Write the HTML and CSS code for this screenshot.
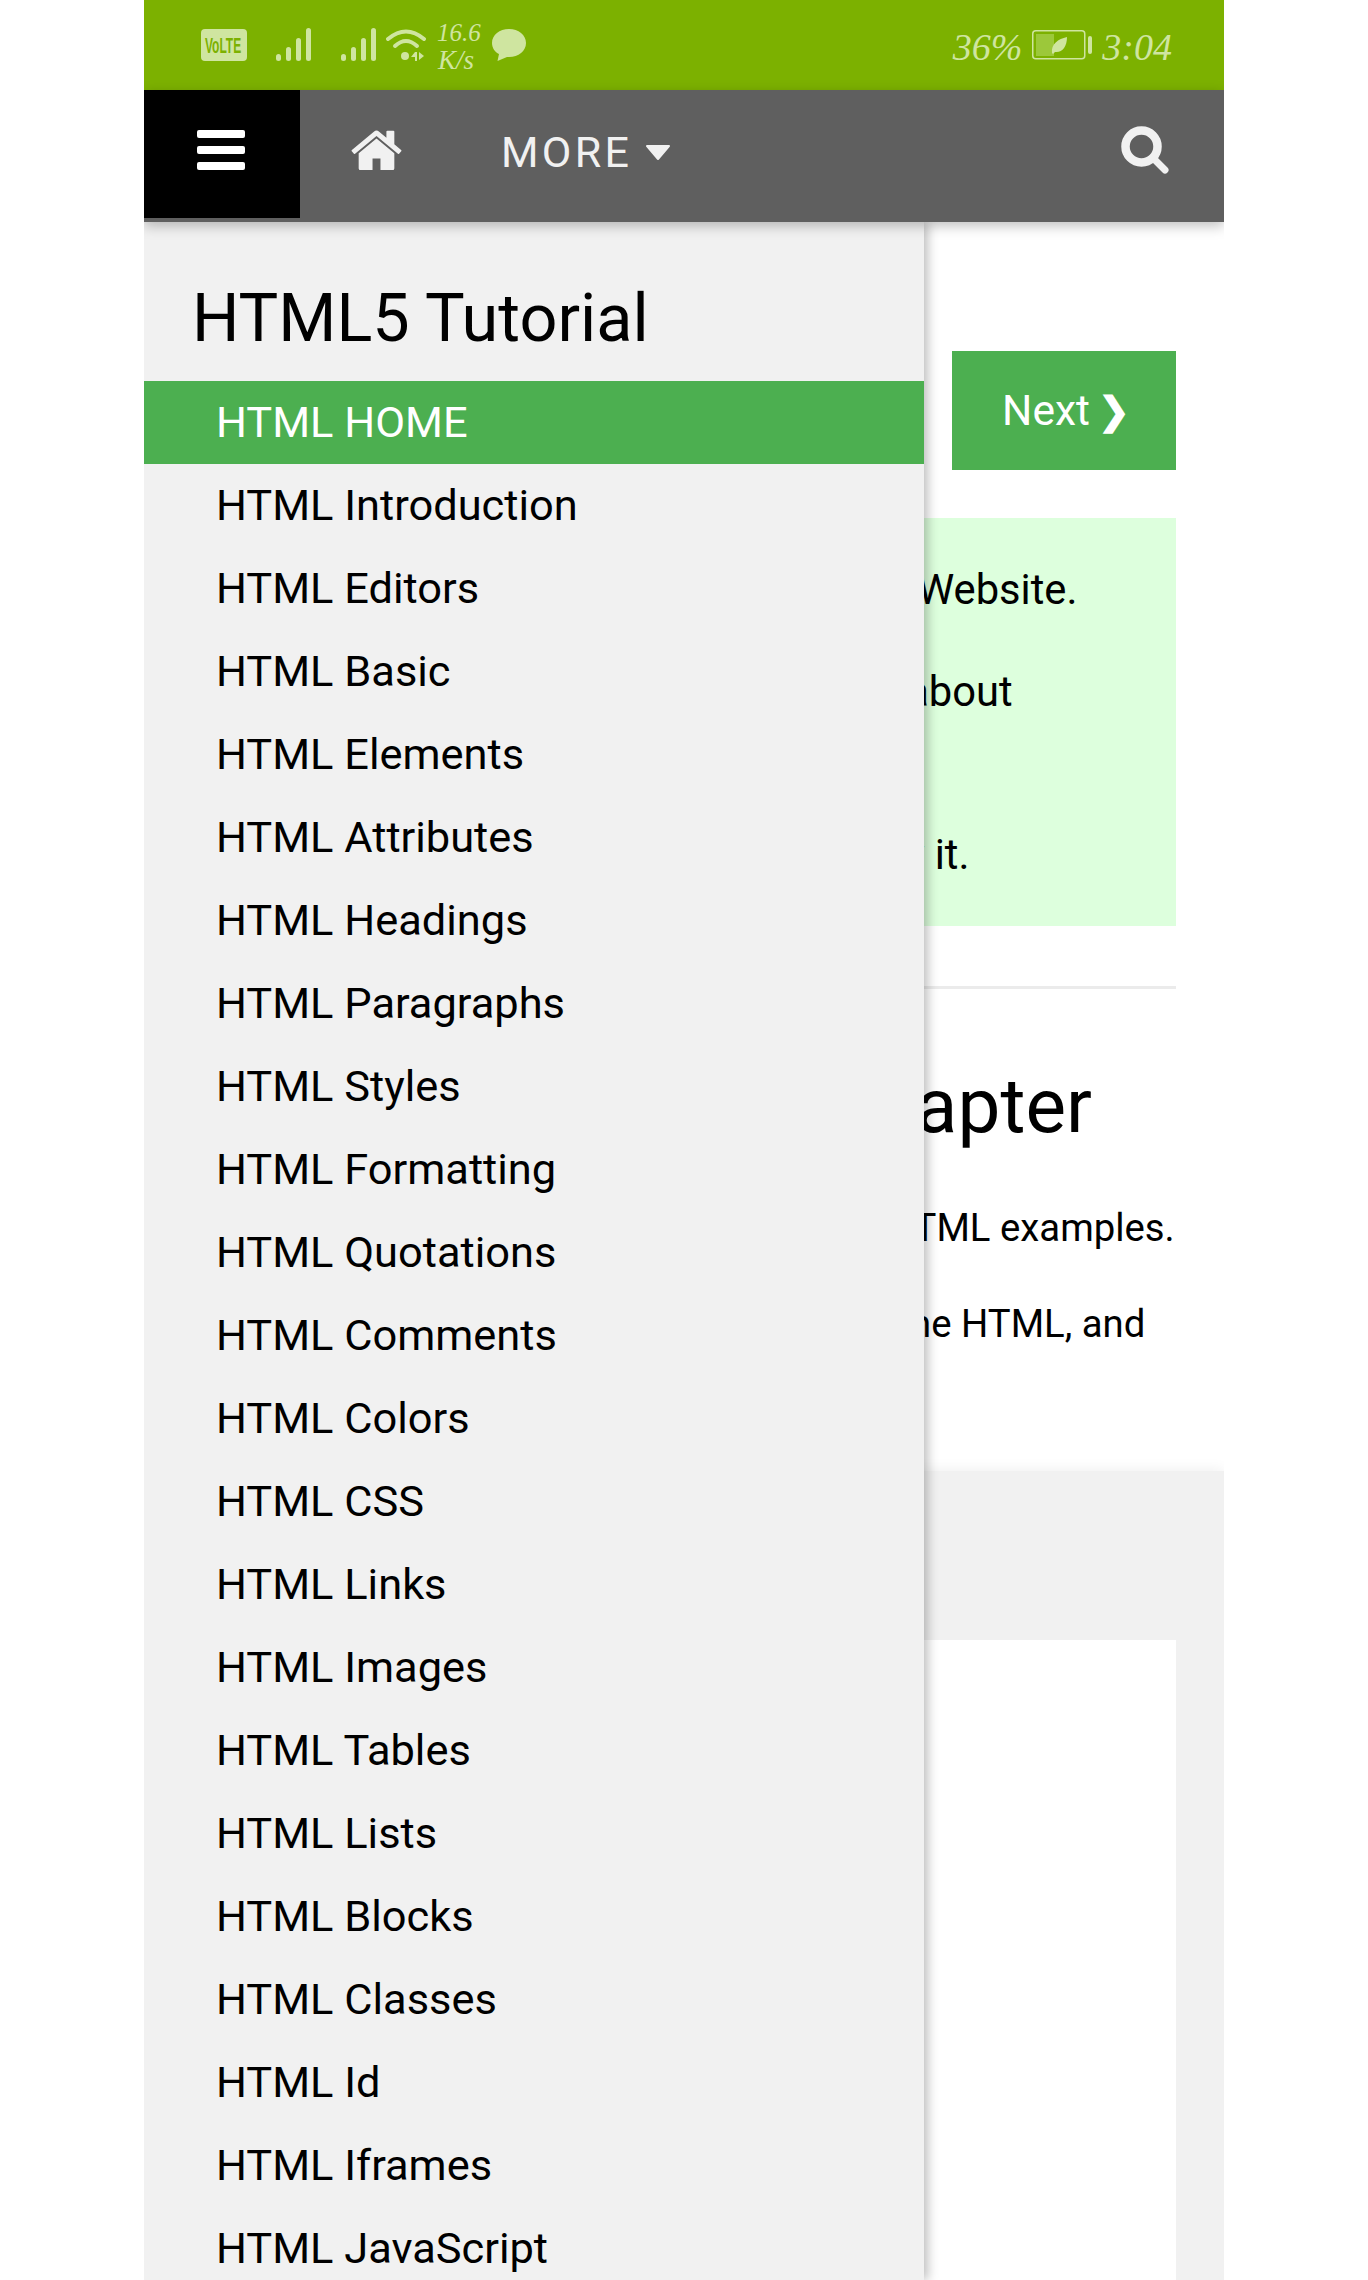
FILE: index.html
```html
<!DOCTYPE html>
<html lang="en">
<head>
<meta charset="utf-8">
<title>HTML5 Tutorial</title>
<link rel="stylesheet" href="styles.css">
</head>
<body>
<div class="phone">
  <header class="status">
    <div class="status-left">
      <svg class="i-volte" viewBox="0 0 46 32"><rect width="46" height="32" rx="4" fill="#cfe5a0"/><text transform="translate(4 24) scale(.545 1)" class="volte-t">VoLTE</text></svg>
      <svg class="i-sig" viewBox="0 0 36 34"><g fill="#cfe5a0"><rect x="0" y="26" width="5" height="7" rx="2.500"/><rect x="10" y="19" width="5" height="14" rx="2.500"/><rect x="20" y="10" width="5" height="23" rx="2.500"/><rect x="30" y="0" width="5" height="33" rx="2.500"/></g></svg>
      <svg class="i-sig sig2" viewBox="0 0 36 34"><g fill="#cfe5a0"><rect x="0" y="26" width="5" height="7" rx="2.500"/><rect x="10" y="19" width="5" height="14" rx="2.500"/><rect x="20" y="10" width="5" height="23" rx="2.500"/><rect x="30" y="0" width="5" height="33" rx="2.500"/></g></svg>
      <svg class="i-wifi" viewBox="0 0 40 34"><g fill="none" stroke="#cfe5a0" stroke-width="4" stroke-linecap="round"><path d="M2 11 Q20 -4 38 11"/><path d="M9 18 Q20 8 31 18"/></g><circle cx="19" cy="28" r="4" fill="#cfe5a0"/><path d="M29 24l-4 5h4zM29 24v9h2v-9zM33 24v8l5-4z" fill="#cfe5a0"/></svg>
      <div class="speed"><span>16.6</span><span class="unit">K/s</span></div>
      <svg class="i-msg" viewBox="0 0 34 32"><path d="M17 0C7.500 0 0 6 0 14c0 5 3 9 7 11l-1.500 7L15 28h2c9.500 0 17-6 17-14S26.500 0 17 0z" fill="#cfe5a0"/></svg>
    </div>
    <div class="status-right">
      <span>36%</span>
      <svg class="i-batt" viewBox="0 0 60 30"><rect x=".75" y=".75" width="52" height="28" rx="3" fill="none" stroke="#cfe5a0" stroke-width="1.500"/><rect x="4" y="4" width="18" height="22" fill="#9cc83a"/><path d="M20 23c-1-9 6-14 15-16 0 10-5 16-12 15l-2 2z" fill="#cfe5a0"/><rect x="56" y="6" width="4" height="18" rx="2" fill="#cfe5a0"/></svg>
      <span>3:04</span>
    </div>
  </header>

  <nav class="topnav">
    <button class="menu-btn" aria-label="Menu">
      <svg class="i-burger" viewBox="0 0 48 40"><g fill="#fff"><rect width="48" height="8" rx="2"/><rect y="16" width="48" height="8" rx="2"/><rect y="32" width="48" height="8" rx="2"/></g></svg>
    </button>
    <svg class="i-home" viewBox="72 256 1648 1248"><path fill="#f1f1f1" d="M1472 992v480q0 26-19 45t-45 19h-384v-384h-256v384h-384q-26 0-45-19t-19-45v-480q0-1 .5-3t.5-3l575-474 575 474q1 2 1 6zm223-69l-62 74q-8 9-21 11h-3q-13 0-21-7l-692-577-692 577q-12 8-24 7-13-2-21-11l-62-74q-8-10-7-23.500t11-21.500l719-599q32-26 76-26t76 26l244 204v-195q0-14 9-23t23-9h192q14 0 23 9t9 23v408l219 182q10 8 11 21.500t-7 23.500z"/></svg>
    <span class="more">MORE</span>
    <svg class="caret" viewBox="0 0 26 16"><path d="M2 1h22l-11 13z" fill="#f1f1f1" stroke="#f1f1f1" stroke-width="2" stroke-linejoin="round"/></svg>
    <svg class="i-search" viewBox="0 0 48 48"><circle cx="20.500" cy="20.500" r="16" fill="none" stroke="#f1f1f1" stroke-width="8.500"/><path d="M33 33l11 11" stroke="#f1f1f1" stroke-width="7" stroke-linecap="round"/></svg>
  </nav>

  <div class="body">
    <main class="content">
      <div class="next-row"><a class="next">Next<span class="chev">❯</span></a></div>
      <section class="note">
        <p>With HTML you can create your own Website.</p>
        <p>This tutorial teaches you everything about HTML.</p>
        <p>HTML is easy to learn - You will enjoy it.</p>
      </section>
      <div class="rule"></div>
      <h2 class="chapter">Examples in Every Chapter</h2>
      <p class="lead">This HTML tutorial contains hundreds of HTML examples.</p>
      <p class="lead">With our online HTML editor, you can edit the HTML, and click on a button to view the result.</p>
    </main>
    <section class="grey">
      <div class="card"></div>
    </section>

    <aside class="sidebar">
      <h3 class="side-title">HTML5 Tutorial</h3>
      <a class="item active">HTML HOME</a>
      <a class="item">HTML Introduction</a>
      <a class="item">HTML Editors</a>
      <a class="item">HTML Basic</a>
      <a class="item">HTML Elements</a>
      <a class="item">HTML Attributes</a>
      <a class="item">HTML Headings</a>
      <a class="item">HTML Paragraphs</a>
      <a class="item">HTML Styles</a>
      <a class="item">HTML Formatting</a>
      <a class="item">HTML Quotations</a>
      <a class="item">HTML Comments</a>
      <a class="item">HTML Colors</a>
      <a class="item">HTML CSS</a>
      <a class="item">HTML Links</a>
      <a class="item">HTML Images</a>
      <a class="item">HTML Tables</a>
      <a class="item">HTML Lists</a>
      <a class="item">HTML Blocks</a>
      <a class="item">HTML Classes</a>
      <a class="item">HTML Id</a>
      <a class="item">HTML Iframes</a>
      <a class="item">HTML JavaScript</a>
    </aside>
  </div>
</div>
</body>
</html>
```
FILE: styles.css
```css
* { box-sizing: border-box; }
html, body { margin: 0; padding: 0; background: #fff; height: 2280px; overflow: hidden; }
body { font-family: Roboto, "Liberation Sans", sans-serif; color: #000; }
.phone { width: 1080px; height: 2280px; margin-left: 144px; overflow: hidden; display: flex; flex-direction: column; }

.status { height: 90px; flex: none; background: #7cb100; display: flex; justify-content: space-between; align-items: center; padding: 0 52px 0 57px; font-family: "Liberation Serif", serif; font-style: italic; color: #cfe5a0; }
.status-left, .status-right { display: flex; align-items: center; }
.status-right { font-size: 38px; gap: 10px; padding-top: 4px; }
.i-volte { width: 46px; height: 32px; margin-right: 29px; }
.volte-t { font: bold 22px "Liberation Sans", sans-serif; fill: #7cb100; }
.i-sig { width: 36px; height: 34px; margin-right: 29px; }
.sig2 { margin-right: 9px; }
.i-wifi { width: 40px; height: 34px; margin-right: 11px; }
.speed { display: flex; flex-direction: column; align-items: flex-start; font-size: 25px; line-height: 27px; margin-right: 12px; width: 43px; padding-top: 2px; }
.unit { padding-left: 1px; font-size: 27px; margin-top: 1px; }
.i-msg { width: 34px; height: 32px; }
.i-batt { width: 60px; height: 30px; margin-top: -4px; }

.topnav { height: 132px; flex: none; background: #5f5f5f; display: flex; align-items: flex-start; position: relative; z-index: 3; box-shadow: 0 4px 12px rgba(0,0,0,.25); }
.menu-btn { width: 156px; height: 128px; background: #000; border: 0; padding: 40px 2px 0 0; display: flex; justify-content: center; align-items: flex-start; }
.i-burger { width: 48px; height: 40px; flex: none; }
.i-home { width: 51px; height: 40px; margin: 40px 0 0 51px; }
.more { font-size: 43px; letter-spacing: 3.300px; color: #f1f1f1; margin: 38px 0 0 99px; line-height: 49px; }
.caret { width: 26px; height: 16px; margin: 55px 0 0 13px; }
.i-search { width: 48px; height: 48px; margin: 36px 55px 0 auto; }

.body { flex: 1; position: relative; min-height: 0; }
.content { padding: 129px 48px 0; height: 1249px; }
.next-row { display: flex; justify-content: flex-end; }
.next { width: 224px; height: 119px; background: #4caf50; color: #fff; font-size: 42.500px; display: flex; align-items: center; justify-content: center; gap: 8px; padding-left: 4px; }
.chev { font-weight: bold; font-size: 38px; }
.note { background: #ddffdd; margin-top: 48px; height: 408px; padding: 41px 48px 0 48px; font-size: 41.700px; line-height: 61px; }
.note p { margin: 0 0 41px; }
.rule { height: 3px; background: #ebebeb; margin: 60px 0 0; }
.chapter { font-weight: 400; font-size: 76.500px; line-height: 86px; margin: 74px 0 50px; white-space: nowrap; }
.lead { font-size: 38.300px; line-height: 57.500px; margin: 38.500px 0 0; }

.grey { height: 809px; background: #f1f1f1; padding: 169px 48px 0; position: relative; box-shadow: 0 0 14px rgba(0,0,0,.08); }
.card { height: 640px; background: #fff; }

.sidebar { position: absolute; left: 0; top: 0; bottom: 0; width: 780px; background: #f1f1f1; box-shadow: 4px 0 10px rgba(0,0,0,.25); z-index: 2; }
.side-title { font-weight: 400; font-size: 66.600px; line-height: 78px; margin: 0; padding: 57px 48px 24px; }
.item { display: block; height: 83px; line-height: 83px; padding-left: 72px; font-size: 43.400px; white-space: nowrap; }
.active { background: #4caf50; color: #fff; }
```
